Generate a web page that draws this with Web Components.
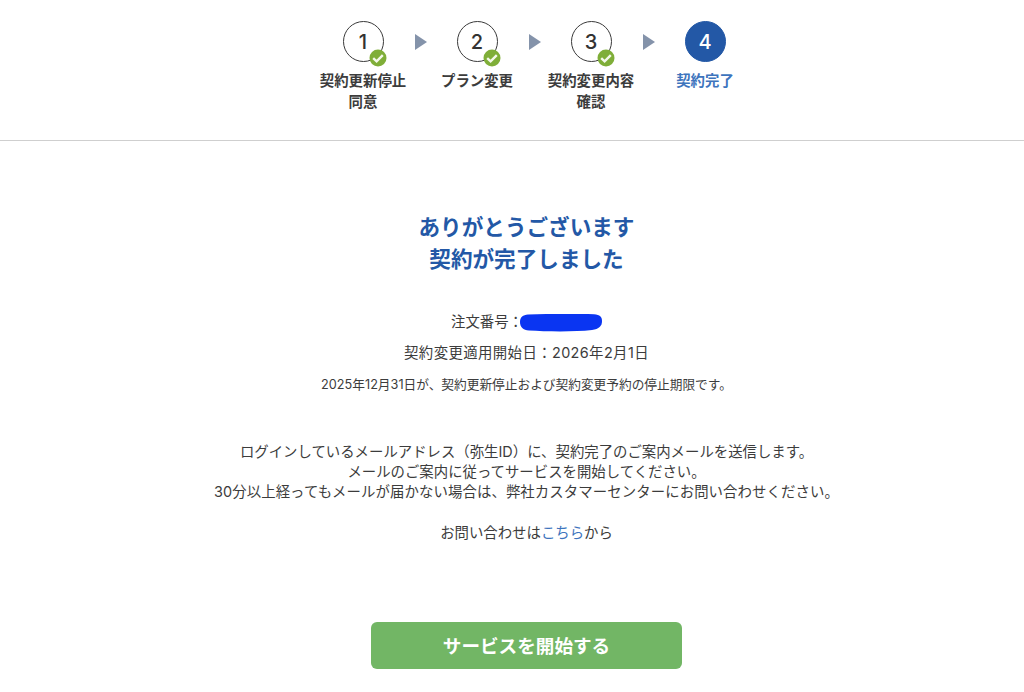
<!DOCTYPE html>
<html lang="ja">
<head>
<meta charset="utf-8">
<title>契約完了</title>
<style>
  html, body { margin: 0; background: #fff; }
  body { font-family: Inter, "Noto Sans CJK JP", sans-serif; color: #3c3c3c; }
</style>
</head>
<body>
<step-bar>
  <step-item num="1" done>契約更新停止<br>同意</step-item>
  <step-arrow></step-arrow>
  <step-item num="2" done>プラン変更</step-item>
  <step-arrow></step-arrow>
  <step-item num="3" done>契約変更内容<br>確認</step-item>
  <step-arrow></step-arrow>
  <step-item num="4" current>契約完了</step-item>
</step-bar>
<done-panel></done-panel>

<script>
class StepBar extends HTMLElement {
  constructor() {
    super();
    this.attachShadow({ mode: 'open' }).innerHTML = `
      <style>
        :host { display: flex; justify-content: center; box-sizing: border-box; height: 141px; padding: 21px 0 0 44px; border-bottom: 1px solid #cfcfcf; }
      </style>
      <slot></slot>`;
  }
}

class StepItem extends HTMLElement {
  constructor() {
    super();
    const current = this.hasAttribute('current');
    const check = this.hasAttribute('done') ? `
      <svg class="check" width="18" height="18" viewBox="0 0 18 18">
        <circle cx="9" cy="9" r="8.5" fill="#7fae38"/>
        <path d="M4.2 9.2 L7.6 12.4 L13.8 6.2" fill="none" stroke="#f4f8ea" stroke-width="2.4"/>
      </svg>` : '';
    this.attachShadow({ mode: 'open' }).innerHTML = `
      <style>
        :host { display: flex; flex-direction: column; align-items: center; width: 88px; }
        .circle { position: relative; box-sizing: border-box; width: 41px; height: 41px; border-radius: 50%;
          display: flex; align-items: center; justify-content: center;
          border: 1.7px solid ${current ? '#2358a6' : '#3a3a3a'}; background: ${current ? '#2358a6' : '#fff'};
          color: ${current ? '#fff' : '#333'}; font: 500 20px/1 Inter, "Noto Sans CJK JP", sans-serif; }
        .check { position: absolute; right: -4px; bottom: -6px; }
        .label { margin-top: 8px; width: 100px; text-align: center; font-size: 14.4px; font-weight: 700; line-height: 21px;
          color: ${current ? '#3d74bd' : '#3c3c3c'}; }
      </style>
      <div class="circle">${this.getAttribute('num')}${check}</div>
      <div class="label"><slot></slot></div>`;
  }
}

class StepArrow extends HTMLElement {
  constructor() {
    super();
    this.attachShadow({ mode: 'open' }).innerHTML = `
      <style>
        :host { display: flex; justify-content: center; width: 26px; height: 41px; align-items: center; padding-left: 1px; margin-right: -1px; }
        i { width: 0; height: 0; border-left: 12.5px solid #8493aa; border-top: 8px solid transparent; border-bottom: 8px solid transparent; }
      </style>
      <i></i>`;
  }
}

class DonePanel extends HTMLElement {
  constructor() {
    super();
    this.attachShadow({ mode: 'open' }).innerHTML = `
      <style>
        :host { display: block; box-sizing: border-box; padding-left: 29px; text-align: center; color: #3c3c3c; font-size: 14.4px; }
        h1 { margin: 70px 0 0; font-size: 21.6px; line-height: 32px; font-weight: 700; color: #2358a6; }
        .order { margin: 37px 0 0; line-height: 20px; display: flex; justify-content: center; align-items: flex-start; height: 20px; }
        .order svg { display: block; margin: 2px 0 0 -3px; }
        .start { margin: 11px 0 0; line-height: 20px; letter-spacing: .4px; }
        .limit { margin: 12px 0 0; font-size: 12.7px; line-height: 20px; }
        .guide { margin: 47px 0 0; line-height: 20px; }
        .guide span { letter-spacing: .09px; }
        .ask { margin: 21px 0 0; line-height: 20px; }
        a { color: #3d74bd; text-decoration: none; }
        button { display: block; box-sizing: border-box; width: 311px; height: 47px; margin: 79px auto 0; padding: 0 0 3px; border: 0; border-radius: 6px;
          background: #72b665; color: #fff; font: 700 18.6px "Noto Sans CJK JP", sans-serif; }
      </style>
      <h1>ありがとうございます<br>契約が完了しました</h1>
      <p class="order">注文番号：<svg width="82" height="18" viewBox="0 0 82 18"><path d="M8 0.5 C30 -0.2 58 0 74 0.2 C80 0.5 82 3 82 7 C82 12 79 15 72 16 C54 18 26 17.5 9 16.5 C3 16 0 13 0 8 C0 3 3 1 8 0.5 Z" fill="#0a35f2"/></svg></p>
      <p class="start">契約変更適用開始日：2026年2月1日</p>
      <p class="limit">2025年12月31日が、契約更新停止および契約変更予約の停止期限です。</p>
      <p class="guide">ログインしているメールアドレス（弥生ID）に、契約完了のご案内メールを送信します。<br>メールのご案内に従ってサービスを開始してください。<br><span>30分以上経ってもメールが届かない場合は、弊社カスタマーセンターにお問い合わせください。</span></p>
      <p class="ask">お問い合わせは<a href="#">こちら</a>から</p>
      <button>サービスを開始する</button>`;
  }
}

customElements.define('step-bar', StepBar);
customElements.define('step-item', StepItem);
customElements.define('step-arrow', StepArrow);
customElements.define('done-panel', DonePanel);
</script>
</body>
</html>
